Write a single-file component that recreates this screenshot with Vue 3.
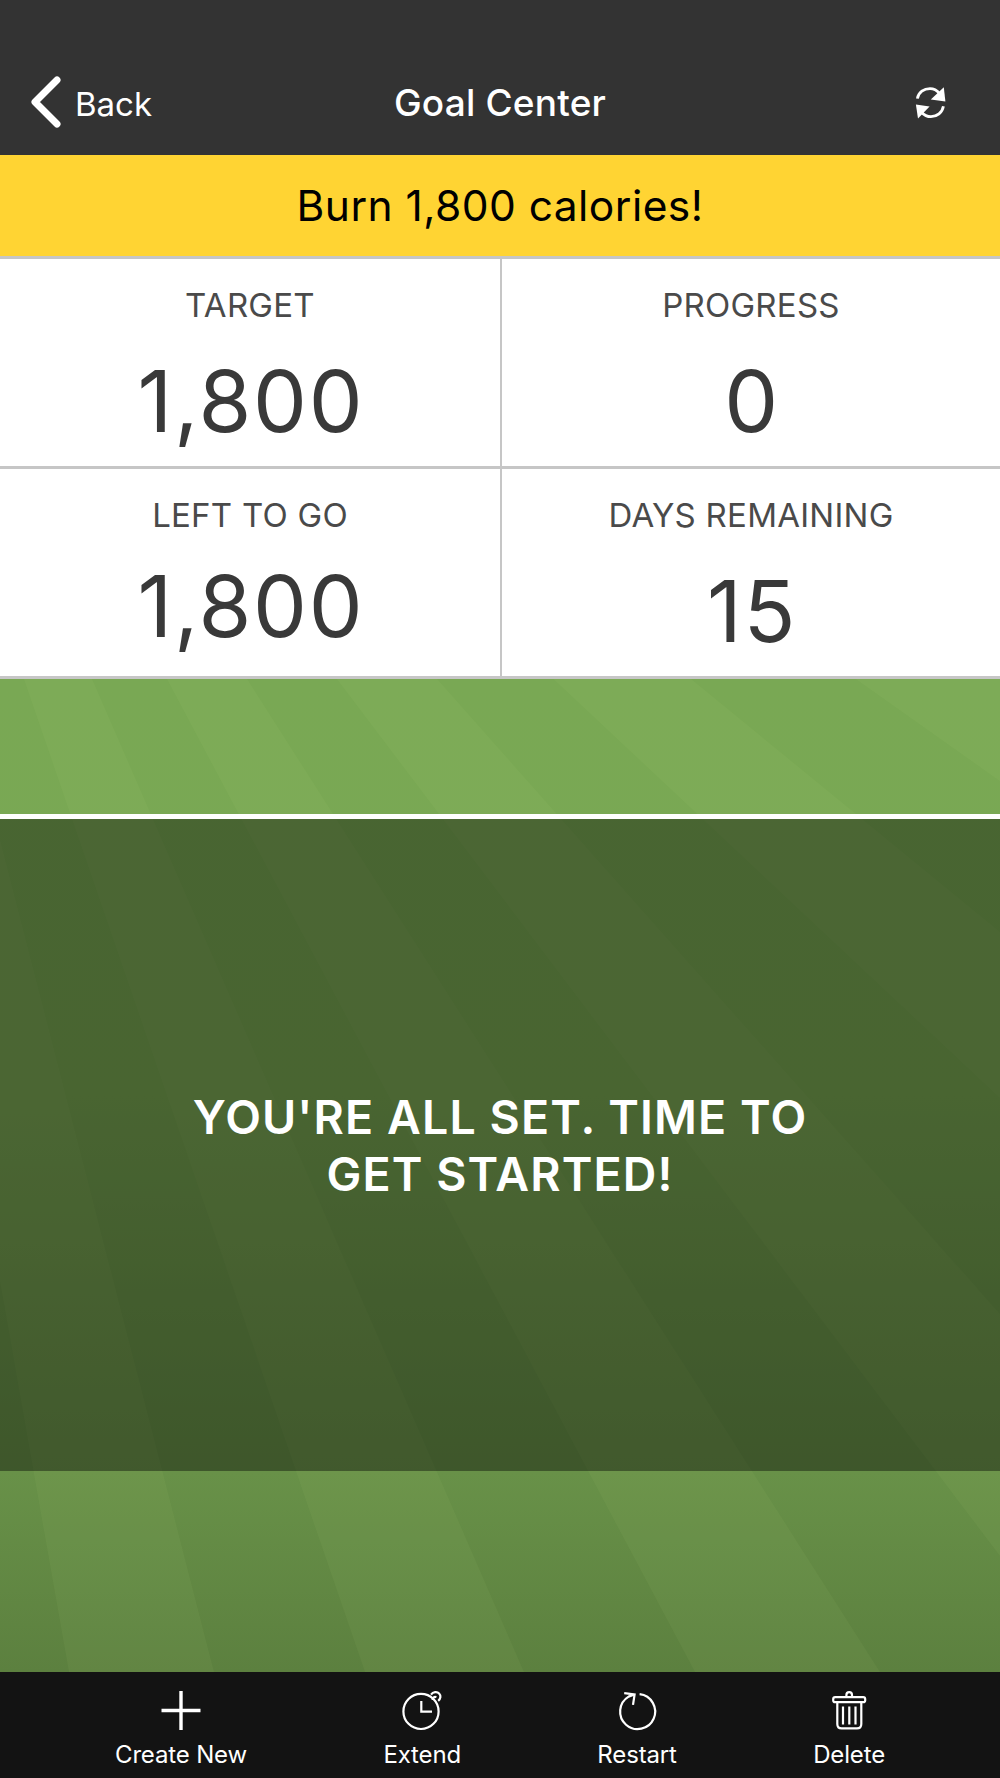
<template>
  <div class="screen">
    <header class="nav-bar">
      <button class="back-btn">
        <svg class="chevron" viewBox="0 0 34 56">
          <path d="M30 6 L8 28 L30 50" />
        </svg>
        <span>Back</span>
      </button>
      <h1>Goal Center</h1>
      <button class="refresh-btn">
        <svg viewBox="0 0 40 40">
          <path class="arc" d="M7.4 16.6 C8.4 10.2 14 6.6 20 6.6 C24 6.6 27 8.4 29.5 11.5" />
          <path class="head" d="M33.8 5.2 L35.4 19.4 L20.8 17.4 Z" />
          <path class="arc" d="M33.4 24.2 C32.2 30.8 27 34.7 21 34.7 C17 34.7 14 33 11.4 30.2" />
          <path class="head" d="M5.9 22.6 L19.6 24.4 L8 36.6 Z" />
        </svg>
      </button>
    </header>

    <div class="goal-banner">Burn 1,800 calories!</div>

    <section class="stats">
      <div v-for="stat in stats" :key="stat.label" class="stat" :class="{ raised: stat.raised }">
        <span class="stat-label">{{ stat.label }}</span>
        <span class="stat-value">{{ stat.value }}</span>
      </div>
    </section>

    <main class="field">
      <svg class="stripes" viewBox="0 679 1000 993" preserveAspectRatio="none">
        <polygon v-for="points in stripes" :key="points" :points="points" />
      </svg>
      <div class="message">
        <p>YOU'RE ALL SET. TIME TO<br />GET STARTED!</p>
      </div>
    </main>

    <footer class="toolbar">
      <button class="tool">
        <svg class="plus" viewBox="0 0 44 44">
          <path d="M22 2 V41 M2.5 21.5 H41.5" />
        </svg>
        <span>Create New</span>
      </button>
      <button class="tool">
        <svg viewBox="0 0 44 44">
          <circle cx="21" cy="22.4" r="17.6" />
          <path d="M21.3 12 V22.6 H32" />
          <path d="M31 5.6 C33 2.8 37.2 2.4 39.1 4.5 C41.2 6.7 40.8 9.7 38.2 11.8" />
          <path d="M32.6 11 C32.6 8.6 34.4 7.4 36.4 8.2" />
        </svg>
        <span>Extend</span>
      </button>
      <button class="tool">
        <svg viewBox="0 0 44 44">
          <path d="M24.6 5.2 A17.5 17.5 0 1 1 13.6 7.6 L18.8 5.8" />
          <path d="M9.2 4.2 L19.6 5.5 L18 15.8" />
        </svg>
        <span>Restart</span>
      </button>
      <button class="tool">
        <svg viewBox="0 0 44 44">
          <path d="M19.4 8 V6 A2.8 2.8 0 0 1 25 6 V8" />
          <rect x="6.2" y="8.2" width="32" height="5" rx="2" />
          <path d="M10.3 13.2 V35 Q10.3 39.4 14.6 39.4 H30 Q34.3 39.4 34.3 35 V13.2" />
          <path d="M16 17.5 V35.5 M22.3 17.5 V35.5 M28.5 17.5 V35.5" />
        </svg>
        <span>Delete</span>
      </button>
    </footer>
  </div>
</template>

<script setup>
const stats = [
  { label: 'TARGET', value: '1,800' },
  { label: 'PROGRESS', value: '0' },
  { label: 'LEFT TO GO', value: '1,800', raised: true },
  { label: 'DAYS REMAINING', value: '15' }
]

// Light mowing stripes fanning out over the grass
const stripes = [
  '0,840 214,1672 69,1672 0,1281',
  '24,679 92,679 524,1672 365,1672',
  '167,679 247,679 880,1672 695,1672',
  '337,679 437,679 1000,1314 1000,1556',
  '553.5,679 691,679 1000,932 1000,1098',
  '856,679 1000,679 1000,781'
]
</script>

<style>
body {
  margin: 0;
  background: #131313;
}
</style>

<style scoped>
.screen {
  width: 1000px;
  height: 1778px;
  display: flex;
  flex-direction: column;
  overflow: hidden;
  font-family: Inter, 'Liberation Sans', sans-serif;
}

button {
  padding: 0;
  border: 0;
  background: none;
  color: #fff;
  font: inherit;
}

svg {
  display: block;
  fill: none;
}

.nav-bar {
  height: 155px;
  box-sizing: border-box;
  padding: 50px 27px 0;
  display: grid;
  grid-template-columns: 1fr auto 1fr;
  align-items: center;
  background: #333;
  color: #fff;
}

.back-btn {
  display: flex;
  align-items: center;
  gap: 14px;
  font-size: 33px;
  line-height: 40px;
}

.back-btn span {
  padding-top: 3px;
}

.chevron {
  width: 34px;
  height: 56px;
  margin-bottom: 1px;
  stroke: #fff;
  stroke-width: 7;
  stroke-linecap: round;
  stroke-linejoin: round;
}

.nav-bar h1 {
  margin: 0;
  font-size: 37px;
  font-weight: 500;
  line-height: 44px;
  letter-spacing: 0.2px;
}

.refresh-btn {
  justify-self: end;
  margin: 0 23px 2px 0;
}

.refresh-btn svg {
  width: 40px;
  height: 40px;
}

.arc {
  stroke: #fff;
  stroke-width: 2.8;
}

.head {
  fill: #fff;
}

.goal-banner {
  height: 101px;
  background: #ffd433;
  color: #000;
  font-size: 42.5px;
  line-height: 101px;
  letter-spacing: 0.45px;
  text-align: center;
}

.stats {
  padding: 3px 0;
  display: grid;
  grid-template-columns: 500px 498px;
  grid-template-rows: 207px 207px;
  gap: 3px 2px;
  background: #c6c6c6;
}

.stat {
  padding-top: 26px;
  display: flex;
  flex-direction: column;
  align-items: center;
  background: #fff;
}

.stat-label {
  color: #4a4a4a;
  font-size: 33px;
  line-height: 40px;
  letter-spacing: 0.25px;
}

.stat-value {
  margin-top: 26px;
  padding-left: 2px;
  color: #393939;
  font-size: 85.5px;
  line-height: 100px;
  letter-spacing: 1.7px;
}

.raised .stat-value {
  margin-top: 21px;
}

.field {
  position: relative;
  height: 993px;
  box-sizing: border-box;
  padding-top: 135px;
  background: linear-gradient(#79a854, #7aa853 42%, #689148 80%, #5c803f);
}

.stripes {
  position: absolute;
  inset: 0;
  width: 100%;
  height: 100%;
  fill: rgba(240, 255, 170, 0.042);
}

.message {
  position: relative;
  height: 652px;
  display: flex;
  align-items: center;
  justify-content: center;
  border-top: 5px solid #fff;
  background: rgba(0, 0, 0, 0.4);
  background-clip: padding-box;
}

.message p {
  margin: 0;
  padding-top: 1px;
  color: #fff;
  font-size: 46.5px;
  font-weight: 600;
  line-height: 57px;
  letter-spacing: 1.1px;
  text-align: center;
}

.toolbar {
  flex: 1;
  padding: 17px 115px 0;
  display: flex;
  justify-content: space-between;
  align-items: flex-start;
  background: #131313;
}

.tool {
  display: flex;
  flex-direction: column;
  align-items: center;
  font-size: 24px;
  line-height: 30px;
  letter-spacing: -0.15px;
}

.tool svg {
  width: 44px;
  height: 44px;
  margin-bottom: 7px;
  stroke: #fff;
  stroke-width: 2.2;
}

.tool .plus {
  stroke-width: 3.4;
}
</style>
